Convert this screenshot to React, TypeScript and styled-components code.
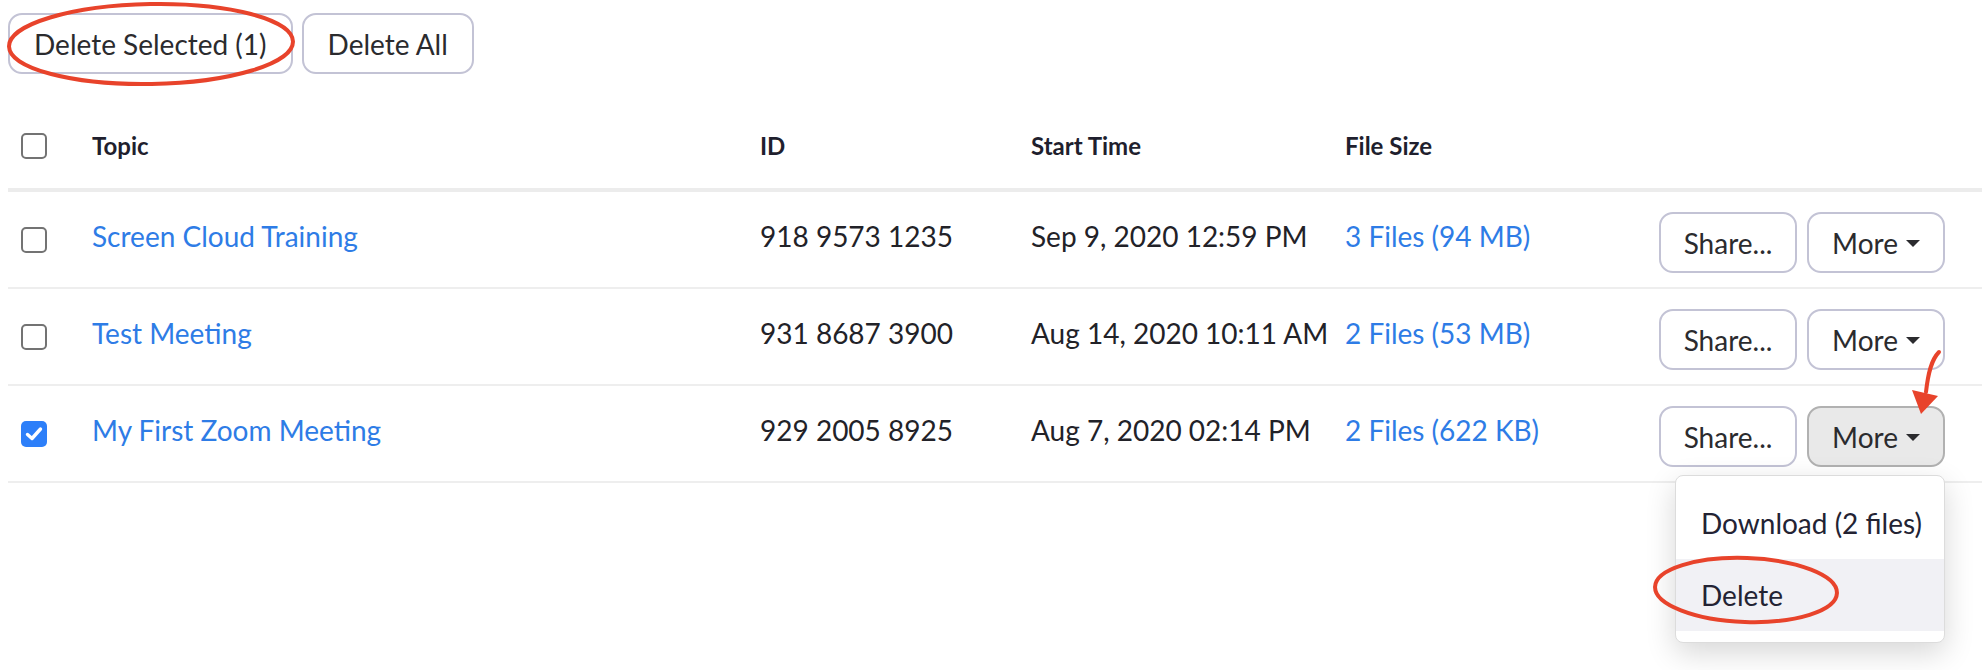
import React from "react";
import styled, { createGlobalStyle } from "styled-components";

const GlobalStyle = createGlobalStyle`
  html, body { margin: 0; padding: 0; background: #ffffff; }
  body { font-family: Lato, "Open Sans", Arial, sans-serif; color: #232333; }
  * { box-sizing: border-box; }
`;

const Page = styled.div`
  position: relative;
  width: 1982px;
  height: 670px;
  padding: 13px 0 0 8px;
  overflow: hidden;
`;

const Toolbar = styled.div`
  display: flex;
  gap: 9px;
`;

const Button = styled.button<{ $active?: boolean }>`
  display: inline-flex;
  align-items: center;
  justify-content: center;
  gap: 8px;
  height: 61px;
  padding: 0 24px;
  border: 2px solid ${(p) => (p.$active ? "#b1b1b1" : "#c3c3d5")};
  border-radius: 14px;
  background: ${(p) => (p.$active ? "#e9e9e9" : "#ffffff")};
  color: #2b2b2e;
  font-family: Lato, "Open Sans", Arial, sans-serif;
  font-size: 28px;
  white-space: nowrap;
  cursor: pointer;
`;

const ActionButton = styled(Button)`
  width: 138px;
  padding: 0;
`;

const Table = styled.div`
  margin-top: 29px;
`;

const Row = styled.div<{ $header?: boolean }>`
  display: grid;
  grid-template-columns: 84px 668px 271px 314px 220px 1fr;
  align-items: center;
  height: ${(p) => (p.$header ? "89px" : "97px")};
  border-bottom: ${(p) => (p.$header ? "4px solid #ececec" : "2px solid #eeeeee")};
`;

const CheckCell = styled.div`
  padding-left: 13px;
  display: flex;
  align-items: center;
`;

const HeadCell = styled.div`
  font-size: 24px;
  font-weight: 700;
  color: #1f1f2e;
`;

const Cell = styled.div`
  font-size: 28px;
  color: #222228;
  white-space: nowrap;
  margin-bottom: 8px;
`;

const LinkCell = styled(Cell)`
  color: #2e7ce6;
`;

const Actions = styled.div`
  display: flex;
  justify-content: flex-end;
  align-items: center;
  gap: 10px;
  padding: 6px 37px 0 0;
`;

const Box = styled.span<{ $checked?: boolean }>`
  display: inline-flex;
  align-items: center;
  justify-content: center;
  width: 26px;
  height: 26px;
  border-radius: 5px;
  border: ${(p) => (p.$checked ? "none" : "2px solid #737373")};
  background: ${(p) => (p.$checked ? "#2d7ff9" : "#ffffff")};
`;

const Caret = styled.span`
  display: inline-block;
  width: 0;
  height: 0;
  border-left: 7px solid transparent;
  border-right: 7px solid transparent;
  border-top: 7px solid #2b2b2e;
  margin-top: 2px;
`;

const MoreWrap = styled.div`
  position: relative;
`;

const Menu = styled.div`
  position: absolute;
  top: calc(100% + 8px);
  right: 0;
  width: 270px;
  padding: 11px 0;
  background: #ffffff;
  border: 1px solid #dcdcdc;
  border-radius: 8px;
  box-shadow: 0 10px 30px rgba(0, 0, 0, 0.16);
  z-index: 2;
`;

const MenuItem = styled.div<{ $hover?: boolean }>`
  display: flex;
  align-items: center;
  height: 72px;
  padding-left: 25px;
  font-size: 28px;
  color: #232333;
  white-space: nowrap;
  background: ${(p) => (p.$hover ? "#f1f1f5" : "transparent")};
`;

const Overlay = styled.svg`
  position: absolute;
  left: 0;
  top: 0;
  pointer-events: none;
  z-index: 5;
`;

const CheckBox = ({ checked }: { checked?: boolean }) => (
  <Box $checked={checked}>
    {checked && (
      <svg width="18" height="16" viewBox="0 0 18 16">
        <path d="M2.5 8.5 L7 12.5 L15.5 3" fill="none" stroke="#fff" strokeWidth="3.4" strokeLinecap="round" strokeLinejoin="round" />
      </svg>
    )}
  </Box>
);

type Rec = { topic: string; id: string; start: string; files: string; checked?: boolean };

const records: Rec[] = [
  { topic: "Screen Cloud Training", id: "918 9573 1235", start: "Sep 9, 2020 12:59 PM", files: "3 Files (94 MB)" },
  { topic: "Test Meeting", id: "931 8687 3900", start: "Aug 14, 2020 10:11 AM", files: "2 Files (53 MB)" },
  { topic: "My First Zoom Meeting", id: "929 2005 8925", start: "Aug 7, 2020 02:14 PM", files: "2 Files (622 KB)", checked: true },
];

export default function App() {
  return (
    <>
      <GlobalStyle />
      <Page>
        <Toolbar>
          <Button>Delete Selected (1)</Button>
          <Button>Delete All</Button>
        </Toolbar>
        <Table>
          <Row $header>
            <CheckCell>
              <CheckBox />
            </CheckCell>
            <HeadCell>Topic</HeadCell>
            <HeadCell>ID</HeadCell>
            <HeadCell>Start Time</HeadCell>
            <HeadCell>File Size</HeadCell>
            <div />
          </Row>
          {records.map((r) => (
            <Row key={r.id}>
              <CheckCell>
                <CheckBox checked={r.checked} />
              </CheckCell>
              <LinkCell>{r.topic}</LinkCell>
              <Cell>{r.id}</Cell>
              <Cell>{r.start}</Cell>
              <LinkCell>{r.files}</LinkCell>
              <Actions>
                <ActionButton>Share...</ActionButton>
                <MoreWrap>
                  <ActionButton $active={r.checked}>
                    More <Caret />
                  </ActionButton>
                  {r.checked && (
                    <Menu>
                      <MenuItem>Download (2 files)</MenuItem>
                      <MenuItem $hover>Delete</MenuItem>
                    </Menu>
                  )}
                </MoreWrap>
              </Actions>
            </Row>
          ))}
        </Table>
        <Overlay width="1982" height="670" viewBox="0 0 1982 670">
          <ellipse cx="151" cy="44" rx="142" ry="40" fill="none" stroke="#e8432b" strokeWidth="4" transform="rotate(-1 151 44)" />
          <ellipse cx="1746" cy="590" rx="91" ry="32" fill="none" stroke="#e8432b" strokeWidth="4" transform="rotate(2 1746 590)" />
          <path d="M1939 352 C1931 360 1928 374 1926 392" fill="none" stroke="#e8432b" strokeWidth="4" strokeLinecap="round" />
          <polygon points="1912,390 1938,396 1921,414" fill="#e8432b" />
        </Overlay>
      </Page>
    </>
  );
}
